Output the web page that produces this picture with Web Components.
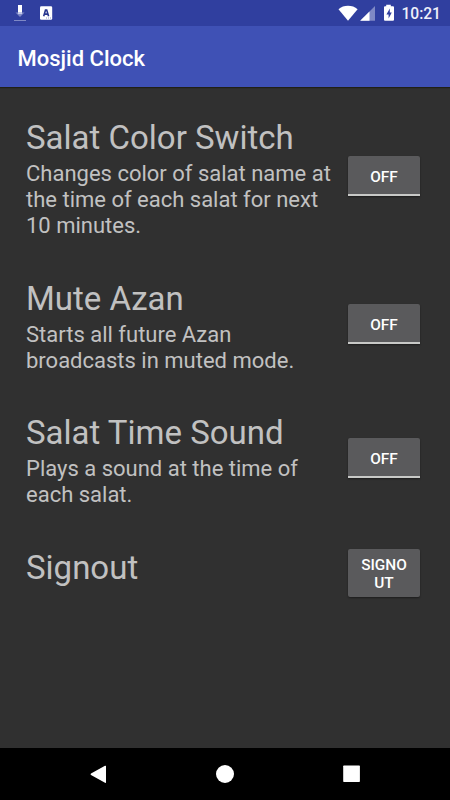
<!DOCTYPE html>
<html lang="en">
<head>
<meta charset="utf-8">
<title>Mosjid Clock</title>
<style>
html,body{margin:0;height:100%;background:#303030}
body{font-family:Roboto,"Noto Sans",sans-serif;overflow:hidden}
</style>
</head>
<body>
<clock-app></clock-app>
<script>
const define = (name, html) => customElements.define(name, class extends HTMLElement {
  constructor() {
    super();
    this.attachShadow({mode: 'open'}).innerHTML = html;
  }
});

define('status-bar', `<style>
:host{display:flex;height:26px;background:#303f9f;color:#fff;flex:none}
svg{display:block;width:450px;height:26px;grid-area:1/1}
.bar{display:grid;width:100%}
time{grid-area:1/1;justify-self:end;padding-right:9px;font-size:15.6px;line-height:28px;font-weight:500;color:#eef0fa}
</style><div class="bar">
<svg viewBox="0 0 450 26">
<path d="M18 5h4v8h-4z" fill="#fff"/><path d="M15.500 12.500h9L20 17z" fill="#7f89c5"/><path d="M18 12h4v2h-4z" fill="#c5caea"/><path d="M14 20h12v1H14z" fill="#7f89c5"/>
<rect x="40" y="6.300" width="12.200" height="13.500" rx="1.300" fill="#fff"/>
<path d="M43.700 16.200 45.500 10h1.200l1.900 6.200M44.500 14.100h3.200" fill="none" stroke="#27358f" stroke-width="1.600"/>
<path d="M46 18h1m1 0h1m1 0h1" stroke="#8e97cc" stroke-width="1"/>
<path d="M338.500 9.200C343.500 4.700 352.500 4.700 357.600 9.200L348 20.700z" fill="#fff"/>
<path d="M360.200 20.800 375 6v14.800z" fill="#7f89c5"/><path d="M360.200 20.800 369.500 11.500v9.300z" fill="#fff"/>
<path d="M386.200 6.200V4.800h4.600v1.400h2.200q1 0 1 1v12.600q0 1-1 1h-8q-1 0-1-1V7.200q0-1 1-1z" fill="#fff"/>
<path d="M389.800 8.600v3.800h2l-3.200 6v-4h-2.200z" fill="#303f9f"/>
</svg><time>10:21</time></div>`);

define('app-bar', `<style>
:host{display:flex;align-items:center;height:61px;flex:none;box-sizing:border-box;padding:3px 18px 0 17.500px;background:#3f51b5;color:#fff;font-size:22px;font-weight:500;box-shadow:0 1px 1px #202016;z-index:1}
</style><slot></slot>`);

define('push-button', `<style>
:host{display:block;width:72px;flex:none}
button{font:500 15.4px/18px Roboto,"Noto Sans",sans-serif;color:#fff;background:#5a5a5c;border:0;border-radius:2px;display:block;width:72px;height:48px;padding:3px 10px 0;overflow-wrap:anywhere;box-shadow:0 1px 2px #0006}
:host([toggle]) button{height:40px;border-bottom:2px solid #c8c9c7;border-radius:2px 2px 0 0;padding-top:4px}
</style><button><slot></slot></button>`);

define('setting-row', `<style>
:host{display:flex;align-items:center;justify-content:space-between}
.text{width:312px;color:#c1c1c1}
h2{margin:0;font-size:33px;line-height:37px;font-weight:400}
.desc{font-size:22px;line-height:26px;padding-top:5px}
::slotted([slot=action]){position:relative;top:var(--shift,-3px)}
</style><div class="text"><h2><slot name="title"></slot></h2><div class="desc"><slot></slot></div></div><slot name="action"></slot>`);

define('nav-bar', `<style>
:host{display:block;height:52px;background:#000;flex:none}
svg{display:block}
</style><svg width="450" height="52" viewBox="0 0 450 52" fill="#fff">
<path d="M105 17.800q1-.5 1 .5v16q0 1-1 .5L91 27q-1-1 0-1.500z"/>
<circle cx="225" cy="26" r="9"/>
<rect x="343.200" y="17.500" width="16.700" height="16.500" rx=".7"/></svg>`);

define('clock-app', `<style>
:host{display:flex;flex-direction:column;width:450px;height:800px;background:#303030}
main{flex:1;padding:32px 30px 0 26px;display:flex;flex-direction:column;gap:40.500px}
.last{--shift:3px;margin-top:-3px}
</style>
<status-bar></status-bar>
<app-bar>Mosjid Clock</app-bar>
<main>
<setting-row><span slot="title">Salat Color Switch</span>Changes color of salat name at the time of each salat for next 10 minutes.<push-button slot="action" toggle>OFF</push-button></setting-row>
<setting-row><span slot="title">Mute Azan</span>Starts all future Azan broadcasts in muted mode.<push-button slot="action" toggle>OFF</push-button></setting-row>
<setting-row><span slot="title">Salat Time Sound</span>Plays a sound at the time of each salat.<push-button slot="action" toggle>OFF</push-button></setting-row>
<setting-row class="last"><span slot="title">Signout</span><push-button slot="action">SIGNOUT</push-button></setting-row>
</main>
<nav-bar></nav-bar>`);
</script>
</body>
</html>
